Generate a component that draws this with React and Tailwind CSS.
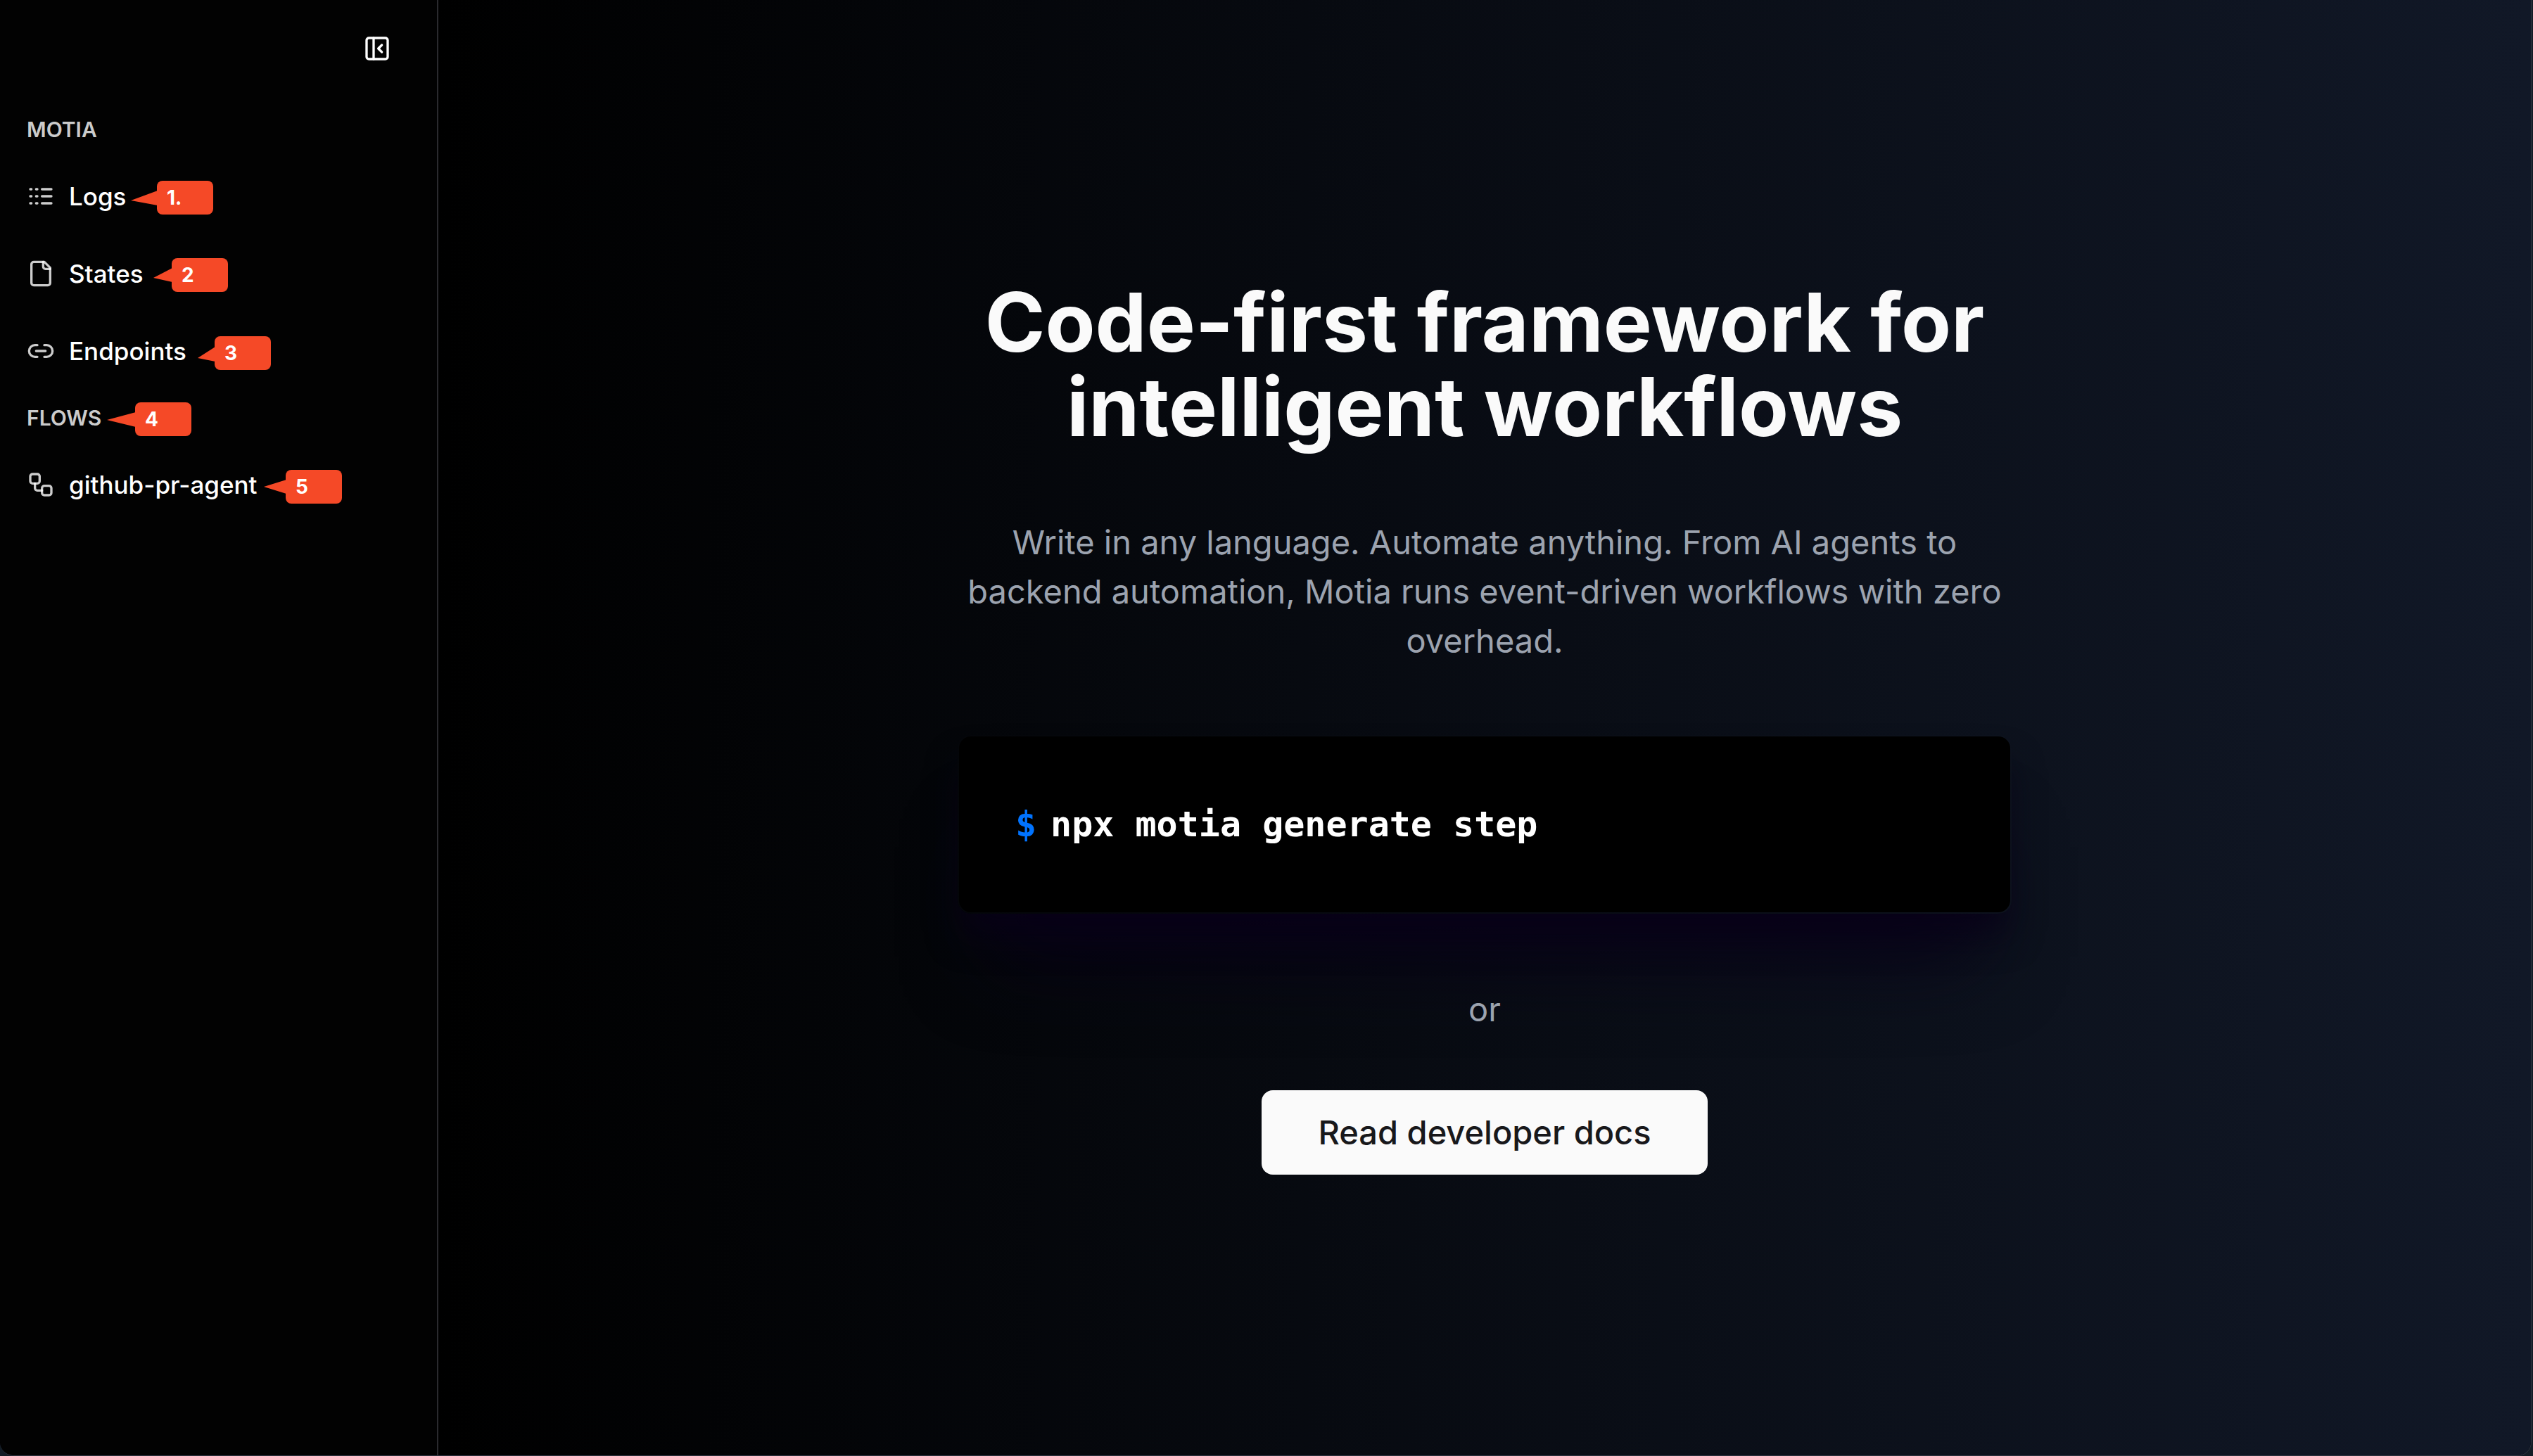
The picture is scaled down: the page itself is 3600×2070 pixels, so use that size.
const strokeProps = {
  viewBox: "0 0 24 24",
  fill: "none",
  stroke: "currentColor",
  strokeWidth: 2,
  strokeLinecap: "round",
  strokeLinejoin: "round",
  "aria-hidden": true,
};

function PanelCloseIcon() {
  return (
    <svg {...strokeProps} className="size-10">
      <rect width="18" height="18" x="3" y="3" rx="2" />
      <path d="M9 3v18" />
      <path d="m16 15-3-3 3-3" />
    </svg>
  );
}

function LogsIcon() {
  return (
    <svg {...strokeProps} className="size-10 shrink-0 text-white/80">
      <path d="M13 12h8M13 18h8M13 6h8M3 12h1M3 18h1M3 6h1M8 12h1M8 18h1M8 6h1" />
    </svg>
  );
}

function FileIcon() {
  return (
    <svg {...strokeProps} className="size-10 shrink-0 text-white/80">
      <path d="M15 2H6a2 2 0 0 0-2 2v16a2 2 0 0 0 2 2h12a2 2 0 0 0 2-2V7Z" />
      <path d="M14 2v4a2 2 0 0 0 2 2h4" />
    </svg>
  );
}

function LinkIcon() {
  return (
    <svg {...strokeProps} className="size-10 shrink-0 text-white/80">
      <path d="M9 17H7A5 5 0 0 1 7 7h2" />
      <path d="M15 7h2a5 5 0 1 1 0 10h-2" />
      <path d="M8 12h8" />
    </svg>
  );
}

function WorkflowIcon() {
  return (
    <svg {...strokeProps} className="size-10 shrink-0 text-white/80">
      <rect width="8" height="8" x="3" y="3" rx="2" />
      <path d="M7 11v4a2 2 0 0 0 2 2h4" />
      <rect width="8" height="8" x="13" y="13" rx="2" />
    </svg>
  );
}

// Numbered callout: a rounded label with a tail that points at its row.
function Callout({ label, place, tail, width }) {
  return (
    <span className={`absolute flex h-12 items-center ${place}`}>
      <svg width={width} height="48" viewBox={`0 0 ${width} 48`} className="fill-[#f54927]" aria-hidden="true">
        <path d={tail} />
      </svg>
      <span className="-ml-px flex h-12 w-20 items-center rounded-lg bg-[#f54927] pl-3.5 text-[28px] leading-none font-bold text-white">
        {label}
      </span>
    </span>
  );
}

function NavItem({ icon, label, callout }) {
  return (
    <li className="relative">
      <a href="#" className="flex h-[110px] items-center gap-5 text-[35px] leading-none font-medium text-white">
        {icon}
        {label}
      </a>
      {callout}
    </li>
  );
}

function GroupLabel({ children, callout }) {
  return (
    <h2 className="relative flex h-20 items-center text-[30px] leading-none font-semibold text-[#cbcbcb]">
      {children}
      {callout}
    </h2>
  );
}

function Sidebar() {
  return (
    <aside className="w-[623px] shrink-0 border-r-2 border-[#2a2a2e] bg-[#020202] pl-[38px]">
      <div className="flex h-[144px] justify-end pt-[49px] pr-[65px]">
        <button type="button" aria-label="Collapse sidebar" className="size-10 text-white">
          <PanelCloseIcon />
        </button>
      </div>
      <nav aria-label="Main">
        <GroupLabel>MOTIA</GroupLabel>
        <ul>
          <NavItem
            icon={<LogsIcon />}
            label="Logs"
            callout={<Callout label="1." place="left-[148px] top-[33px]" width={38} tail="M0 28 38 14V35Z" />}
          />
          <NavItem
            icon={<FileIcon />}
            label="States"
            callout={<Callout label="2" place="left-[180px] top-[33px]" width={27} tail="M0 28 27 14V34Z" />}
          />
          <NavItem
            icon={<LinkIcon />}
            label="Endpoints"
            callout={<Callout label="3" place="left-[243px] top-[34px]" width={25} tail="M0 31 25 15V36Z" />}
          />
        </ul>
        <GroupLabel
          callout={<Callout label="4" place="left-[114px] top-[18px]" width={41} tail="M0 25 41 14V35Z" />}
        >
          FLOWS
        </GroupLabel>
        <ul>
          <NavItem
            icon={<WorkflowIcon />}
            label="github-pr-agent"
            callout={<Callout label="5" place="left-[337px] top-[34px]" width={32} tail="M0 24 32 14V34Z" />}
          />
        </ul>
      </nav>
    </aside>
  );
}

export default function App() {
  return (
    <div className="flex min-h-screen bg-[#131c26] pr-0.5 font-[Inter,sans-serif]">
      <div className="flex flex-1 overflow-hidden rounded-b-[20px] border-r border-b border-[#2e3340] bg-black">
        <Sidebar />
        <main className="flex flex-1 items-center justify-center bg-linear-to-r/srgb from-black to-[#111827] pb-0.5">
          <div className="flex w-[1500px] flex-col items-center text-center">
            <h1 className="text-[116px] leading-[120px] font-bold text-[#fafafa]">
              Code-first framework for intelligent workflows
            </h1>
            <p className="mt-[98px] text-[47px] leading-[70px] text-[#9ca3af]">
              Write in any language. Automate anything. From AI agents to backend automation, Motia runs event-driven
              workflows with zero overhead.
            </p>
            <div className="mt-[98px] flex h-64 w-full items-center rounded-[20px] border-3 border-transparent bg-black bg-clip-padding px-20 text-left font-['DejaVu_Sans_Mono',monospace] text-[50px] leading-[70px] font-bold text-white shadow-[0_36px_50px_-8px_rgba(8,0,24,0.75),0_110px_120px_-50px_rgba(8,0,24,0.9)]">
              <code className="flex gap-5 font-[inherit]">
                <span className="text-[#0073ff]">$</span>
                <span>npx motia generate step</span>
              </code>
            </div>
            <p className="mt-25 text-[47px] leading-[70px] text-[#9ca3af]">or</p>
            <a
              href="#"
              className="mt-20 flex h-30 items-center rounded-2xl bg-[#fafafa] px-20 text-[47px] leading-none font-medium text-[#18181b]"
            >
              Read developer docs
            </a>
          </div>
        </main>
      </div>
    </div>
  );
}
